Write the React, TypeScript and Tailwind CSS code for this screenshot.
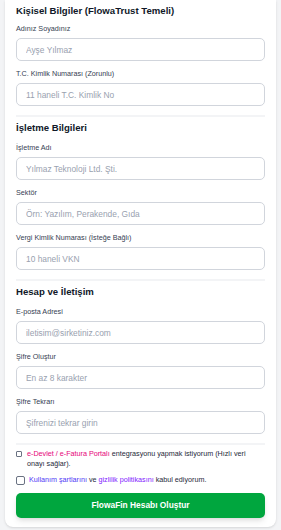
const font = { fontFamily: '"Liberation Sans", Arial, sans-serif' };

type FieldProps = { label: string; placeholder: string; type?: string };

function Field({ label, placeholder, type = "text" }: FieldProps) {
  return (
    <div className="flex flex-col">
      <label className="mb-[4px] block text-[7.2px] leading-[10px] text-gray-700">{label}</label>
      <input
        type={type}
        placeholder={placeholder}
        className="h-[23px] w-full rounded-[5px] border border-gray-300 bg-white px-[9px] text-[8.4px] text-gray-800 placeholder:text-gray-400 focus:outline-none"
      />
    </div>
  );
}

function SectionTitle({ children, className = "" }: { children: string; className?: string }) {
  return <h2 className={`text-[9.6px] font-bold leading-[14px] text-gray-900 ${className}`}>{children}</h2>;
}

export default function App() {
  return (
    <div className="min-h-screen bg-gray-100" style={font}>
      <div className="mx-[5px] rounded-b-[8px] bg-white px-[11px] pb-[9px] pt-[4px] shadow-sm">
        <SectionTitle className="mb-[6px]">Kişisel Bilgiler (FlowaTrust Temeli)</SectionTitle>
        <div className="flex flex-col gap-[8px]">
          <Field label="Adınız Soyadınız" placeholder="Ayşe Yılmaz" />
          <Field label="T.C. Kimlik Numarası (Zorunlu)" placeholder="11 haneli T.C. Kimlik No" />
        </div>

        <div className="mt-[9px] h-[2px] bg-gray-100" />
        <SectionTitle className="mb-[8px] mt-[4px]">İşletme Bilgileri</SectionTitle>
        <div className="flex flex-col gap-[8px]">
          <Field label="İşletme Adı" placeholder="Yılmaz Teknoloji Ltd. Şti." />
          <Field label="Sektör" placeholder="Örn: Yazılım, Perakende, Gıda" />
          <Field label="Vergi Kimlik Numarası (İsteğe Bağlı)" placeholder="10 haneli VKN" />
        </div>

        <div className="mt-[9px] h-[2px] bg-gray-100" />
        <SectionTitle className="mb-[8px] mt-[4px]">Hesap ve İletişim</SectionTitle>
        <div className="flex flex-col gap-[8px]">
          <Field label="E-posta Adresi" placeholder="iletisim@sirketiniz.com" type="email" />
          <Field label="Şifre Oluştur" placeholder="En az 8 karakter" type="password" />
          <Field label="Şifre Tekrarı" placeholder="Şifrenizi tekrar girin" type="password" />
        </div>

        <div className="mt-[9px] h-[2px] bg-gray-100" />
        <div className="mt-[4px] flex flex-col gap-[6px]">
          <label className="flex items-start gap-[5px] text-[7.2px] leading-[10px] text-gray-800">
            <span className="mt-[2px] h-[6px] w-[6px] shrink-0 rounded-[1px] border border-gray-500 bg-white" />
            <span>
              <span className="text-pink-600">e-Devlet / e-Fatura Portalı</span> entegrasyonu yapmak istiyorum (Hızlı veri onayı sağlar).
            </span>
          </label>
          <label className="flex items-center gap-[4px] text-[7.2px] leading-[10px] text-gray-800">
            <span className="h-[9px] w-[9px] shrink-0 rounded-[2px] border border-gray-500 bg-white" />
            <span>
              <span className="text-indigo-600">Kullanım şartlarını</span> ve{" "}
              <span className="text-violet-600">gizlilik politikasını</span> kabul ediyorum.
            </span>
          </label>
        </div>

        <button
          type="button"
          className="mt-[8px] h-[25px] w-full rounded-[5px] bg-green-600 text-[8.4px] font-bold text-white shadow-md"
        >
          FlowaFin Hesabı Oluştur
        </button>
      </div>
    </div>
  );
}
